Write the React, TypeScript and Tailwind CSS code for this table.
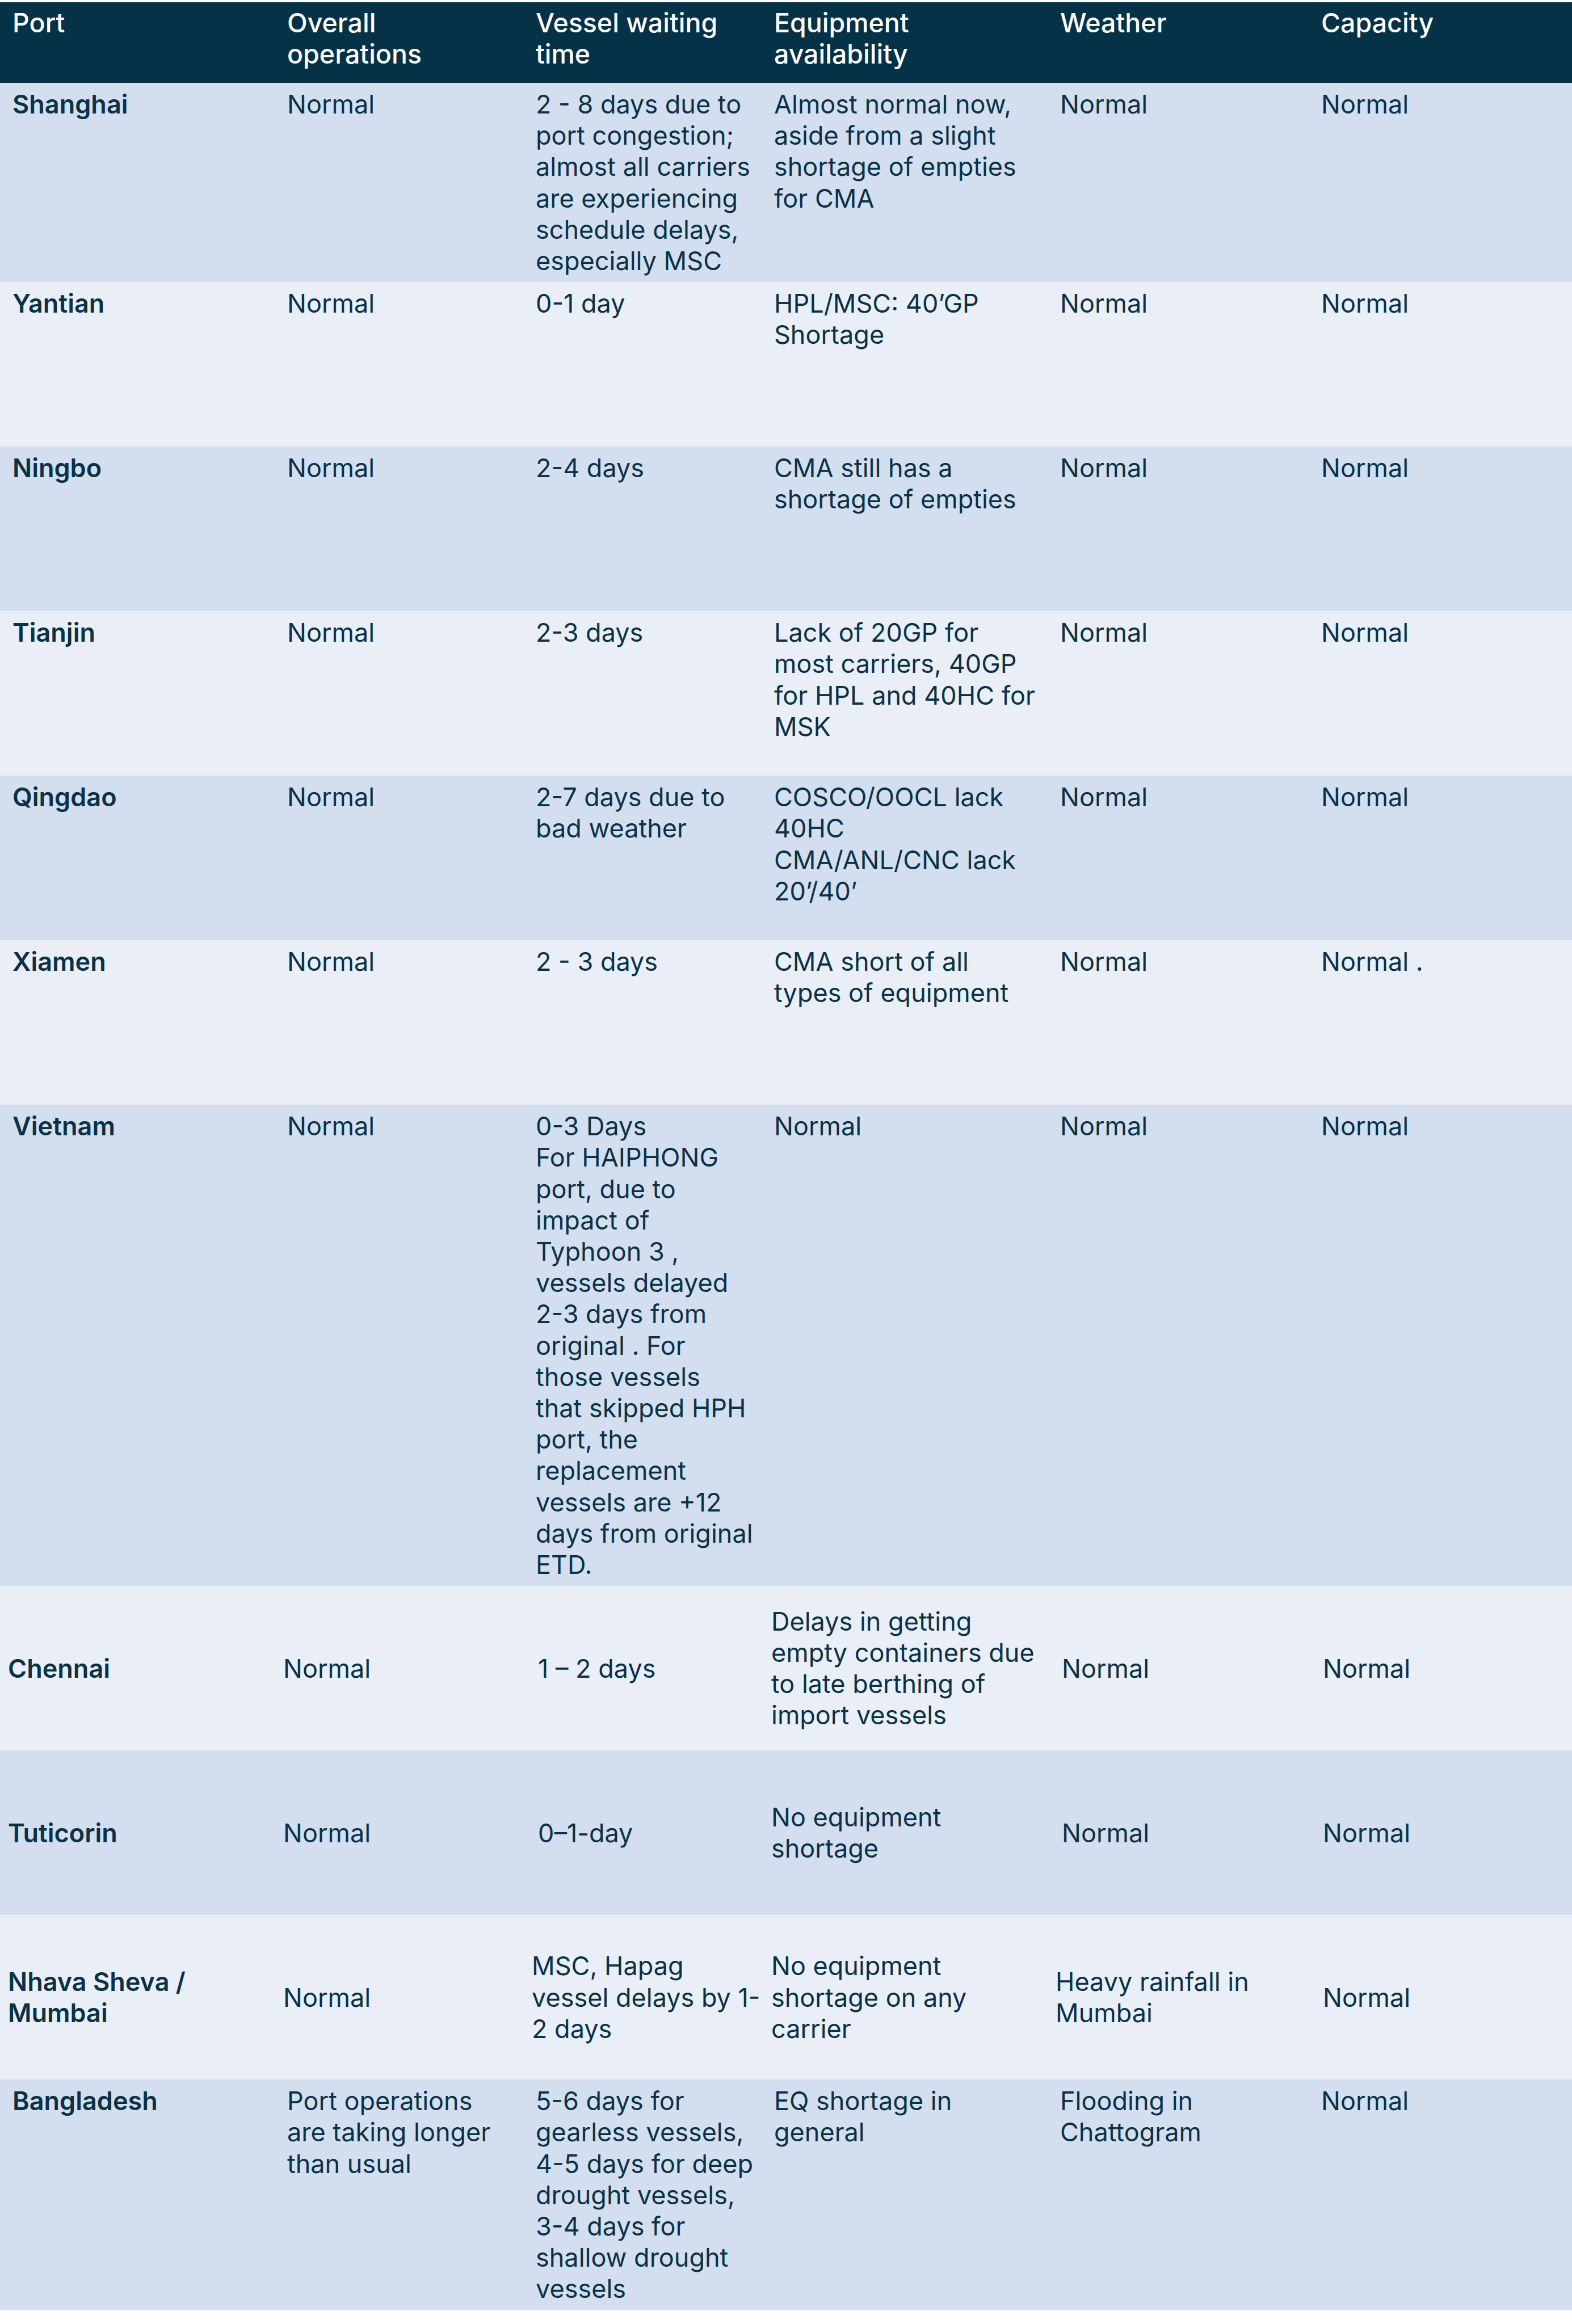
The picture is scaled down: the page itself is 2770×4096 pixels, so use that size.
type Row = {
  port: string[]
  cells: string[][]
  shade: 'dark' | 'light'
  centered?: boolean
  pads?: string[]
}

const headers = [
  ['Port'],
  ['Overall', 'operations'],
  ['Vessel waiting', 'time'],
  ['Equipment', 'availability'],
  ['Weather'],
  ['Capacity'],
]

const rows: Row[] = [
  {
    port: ['Shanghai'],
    shade: 'dark',
    cells: [
      ['Normal'],
      ['2 - 8 days due to', 'port congestion;', 'almost all carriers', 'are experiencing', 'schedule delays,', 'especially MSC'],
      ['Almost normal now,', 'aside from a slight', 'shortage of empties', 'for CMA'],
      ['Normal'],
      ['Normal'],
    ],
  },
  {
    port: ['Yantian'],
    shade: 'light',
    cells: [['Normal'], ['0-1 day'], ['HPL/MSC: 40’GP', 'Shortage'], ['Normal'], ['Normal']],
  },
  {
    port: ['Ningbo'],
    shade: 'dark',
    cells: [['Normal'], ['2-4 days'], ['CMA still has a', 'shortage of empties'], ['Normal'], ['Normal']],
  },
  {
    port: ['Tianjin'],
    shade: 'light',
    cells: [
      ['Normal'],
      ['2-3 days'],
      ['Lack of 20GP for', 'most carriers, 40GP', 'for HPL and 40HC for', 'MSK'],
      ['Normal'],
      ['Normal'],
    ],
  },
  {
    port: ['Qingdao'],
    shade: 'dark',
    cells: [
      ['Normal'],
      ['2-7 days due to', 'bad weather'],
      ['COSCO/OOCL lack', '40HC', 'CMA/ANL/CNC lack', '20’/40’'],
      ['Normal'],
      ['Normal'],
    ],
  },
  {
    port: ['Xiamen'],
    shade: 'light',
    cells: [['Normal'], ['2 - 3 days'], ['CMA short of all', 'types of equipment'], ['Normal'], ['Normal .']],
  },
  {
    port: ['Vietnam'],
    shade: 'dark',
    cells: [
      ['Normal'],
      [
        '0-3 Days',
        'For HAIPHONG',
        'port, due to',
        'impact of',
        'Typhoon 3 ,',
        'vessels delayed',
        '2-3 days from',
        'original . For',
        'those vessels',
        'that skipped HPH',
        'port, the',
        'replacement',
        'vessels are +12',
        'days from original',
        'ETD.',
      ],
      ['Normal'],
      ['Normal'],
      ['Normal'],
    ],
  },
  {
    port: ['Chennai'],
    shade: 'light',
    centered: true,
    pads: ['pl-[14px]', 'pl-[15px]', 'pl-[26px]', 'pl-[17px]', 'pl-[25px]', 'pl-[25px]'],
    cells: [
      ['Normal'],
      ['1 – 2 days'],
      ['Delays in getting', 'empty containers due', 'to late berthing of', 'import vessels'],
      ['Normal'],
      ['Normal'],
    ],
  },
  {
    port: ['Tuticorin'],
    shade: 'dark',
    centered: true,
    pads: ['pl-[14px]', 'pl-[15px]', 'pl-[26px]', 'pl-[17px]', 'pl-[25px]', 'pl-[25px]'],
    cells: [['Normal'], ['0–1-day'], ['No equipment', 'shortage'], ['Normal'], ['Normal']],
  },
  {
    port: ['Nhava Sheva /', 'Mumbai'],
    shade: 'light',
    centered: true,
    pads: ['pl-[14px]', 'pl-[15px]', 'pl-[15px]', 'pl-[17px]', 'pl-[14px]', 'pl-[25px]'],
    cells: [
      ['Normal'],
      ['MSC, Hapag', 'vessel delays by 1-', '2 days'],
      ['No equipment', 'shortage on any', 'carrier'],
      ['Heavy rainfall in', 'Mumbai'],
      ['Normal'],
    ],
  },
  {
    port: ['Bangladesh'],
    shade: 'dark',
    cells: [
      ['Port operations', 'are taking longer', 'than usual'],
      ['5-6 days for', 'gearless vessels,', '4-5 days for deep', 'drought vessels,', '3-4 days for', 'shallow drought', 'vessels'],
      ['EQ shortage in', 'general'],
      ['Flooding in', 'Chattogram'],
      ['Normal'],
    ],
  },
]

const gridCols = 'grid grid-cols-[484px_438px_420px_504px_460px_464px]'

function Lines({ lines }: { lines: string[] }) {
  return (
    <>
      {lines.map((l, i) => (
        <div key={i} className="whitespace-nowrap">
          {l}
        </div>
      ))}
    </>
  )
}

export default function App() {
  return (
    <div
      className="w-[2770px] min-h-[4096px] bg-white pt-[4px] text-[45px] leading-[55.2px] text-[#0a3246]"
      style={{ fontFamily: 'Inter, "Noto Sans", sans-serif' }}
    >
      {/* header */}
      <div className={`${gridCols} h-[142px] bg-[#063247] text-[46.5px] text-white font-medium`}>
        {headers.map((h, i) => (
          <div key={i} className="pl-[22px] pt-[9px]">
            <Lines lines={h} />
          </div>
        ))}
      </div>

      {rows.map((row, r) => {
        const bg = row.shade === 'dark' ? 'bg-[#d3deef]' : 'bg-[#e9eef7]'
        const pad = (i: number) => (row.pads ? row.pads[i] : 'pl-[22px]')
        return (
          <div
            key={r}
            className={`${gridCols} ${bg} min-h-[290px] py-[10px] ${row.centered ? 'items-center' : 'items-start'}`}
          >
            <div className={`${pad(0)} font-semibold`}>
              <Lines lines={row.port} />
            </div>
            {row.cells.map((c, i) => (
              <div key={i} className={pad(i + 1)}>
                <Lines lines={c} />
              </div>
            ))}
          </div>
        )
      })}
    </div>
  )
}
